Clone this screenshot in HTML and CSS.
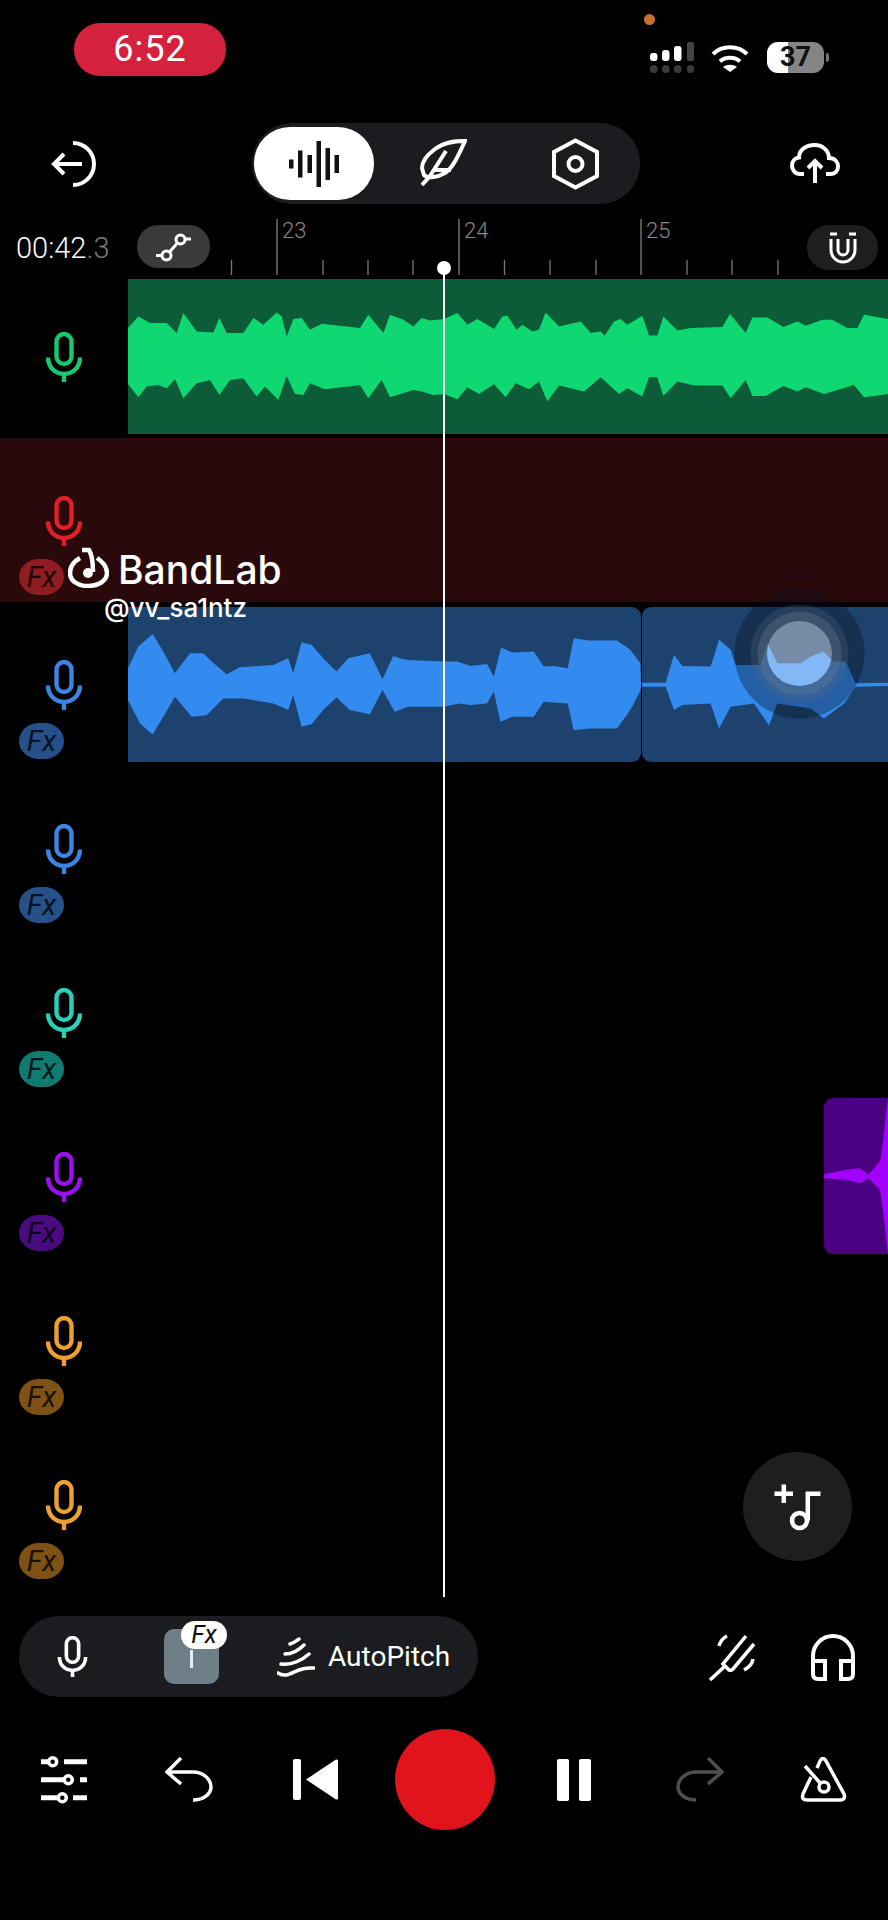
FILE: index.html
```html
<!DOCTYPE html>
<html lang="en">
<head>
<meta charset="utf-8">
<title>BandLab Studio</title>
<link rel="stylesheet" href="styles.css">
</head>
<body>
<svg class="sprite" aria-hidden="true">
  <symbol id="mic" viewBox="0 0 36 50"><rect x="10.500" y="2" width="15" height="30" rx="7.500"/><path d="M2 25.500C2 35 9 42 18 42S34 35 34 25.500M18 42v8"/></symbol>
</svg>
<main class="app">
  <header class="status">
    <div class="clock">6:52</div>
    <span class="rec-dot"></span>
    <div class="status-icons">
      <svg class="signal" viewBox="0 0 44 32"><g fill="#fff"><rect x="0" y="11" width="7.5" height="8" rx="3"/><rect x="12" y="8" width="7.5" height="11" rx="3"/><rect x="24" y="4" width="7.5" height="15" rx="3"/></g><rect x="37" y="0" width="7" height="19" rx="2" fill="#444"/><g fill="#3a3a3a"><rect x="0" y="23" width="7.5" height="8" rx="3.5"/><rect x="12" y="23" width="7.5" height="8" rx="3.5"/><rect x="24" y="23" width="7.5" height="8" rx="3.5"/><rect x="37" y="23" width="7" height="8" rx="3.5"/></g></svg>
      <svg class="wifi" viewBox="0 0 38 29"><path class="st-w" d="M2 11C11 2 27 2 36 11M9 18.500C14 13.500 24 13.500 29 18.500"/><path fill="#fff" d="M12 24C16 21 22 21 26 24L19 29Z"/></svg>
      <div class="battery">37</div>
      <span class="battery-cap"></span>
    </div>
  </header>

  <section class="toolbar">
    <svg class="ic-back st-w" viewBox="0 0 46 46"><path d="M22 2A21 21 0 0 1 22 44M31 23H3M13 13 3 23 13 33"/></svg>
    <div class="seg">
      <div class="seg-item seg-on">
        <svg class="ic-wave" viewBox="0 0 50 46" fill="#111"><rect x="0" y="18.500" width="4.500" height="9"/><rect x="9" y="9.500" width="4.500" height="27"/><rect x="18.500" y="14" width="4.500" height="18"/><rect x="27.500" y="0" width="4.500" height="46"/><rect x="36.500" y="7" width="4.500" height="32"/><rect x="45.500" y="14" width="4.500" height="18"/></svg>
      </div>
      <div class="seg-item">
        <svg class="ic-feather st-w" viewBox="0 0 47 48"><path d="M45 2C34 2 24 3 15 10 7 16 2 23 2 29L4 36C8 40 18 38 25 34 33 29 39 15 45 2ZM2 46 10 37 26 12M15 31H31"/></svg>
      </div>
      <div class="seg-item">
        <svg class="ic-hex st-w" viewBox="0 0 47 52"><path d="M23.500 2.500 45 14V38L23.500 49.500 2 38V14Z"/><circle cx="23.500" cy="26" r="7"/></svg>
      </div>
    </div>
    <svg class="ic-cloud st-w" viewBox="0 0 50 40"><path d="M14 31H10C5 31 2 27 2 22.500 2 18 5 15 9 14.500 9 7 16 2 24.500 2 33 2 39 8 39 15 45 15 48 19 48 23.500 48 28 45 31 40 31H36M25 40V18M18 25 25 18 32 25"/></svg>
  </section>

  <section class="ruler-row">
    <div class="timecode">00:42<span class="timecode-dim">.3</span></div>
    <div class="node-btn">
      <svg class="ic-node st-w3" viewBox="0 0 36 30"><circle cx="24.500" cy="7.500" r="4.500"/><circle cx="10.500" cy="23.500" r="4.500"/><path d="M29 7H35M6 23.500H0M21.500 11 13.500 20"/></svg>
    </div>
    <svg class="ruler" viewBox="210 219 597 56">
      <path class="tick-major" d="M277 219V275M459 219V275M641 219V275"/>
      <path class="tick-minor" d="M231.500 260V275M323 260V275M368 260V275M413 260V275M504.500 260V275M550 260V275M596 260V275M687 260V275M732 260V275M778 260V275"/>
      <text class="ruler-num" x="282" y="238">23</text>
      <text class="ruler-num" x="464" y="238">24</text>
      <text class="ruler-num" x="646" y="238">25</text>
    </svg>
    <div class="magnet-btn">
      <svg class="ic-magnet st-w3" viewBox="0 0 28 32"><path d="M1 2H8M20 2H27M2 7V18A12 12 0 0 0 26 18V7M9 7V18A5 5 0 0 0 19 18V7"/></svg>
    </div>
  </section>

  <section class="tracks">
    <div class="track">
      <div class="head"><svg class="mic mic-green"><use href="#mic"/></svg></div>
      <div class="lane">
        <div class="clip clip-green">
          <svg class="wave wave-green" viewBox="384 28 2280 464" preserveAspectRatio="none">
            <polygon points="384,175 415,140 450,160 500,160 530,190 550,130 590,185 640,188 658,145 680,190 730,190 760,145 790,165 830,128 845,140 860,200 880,148 905,145 930,180 965,162 1080,175 1105,135 1150,190 1170,135 1210,150 1240,170 1265,145 1290,152 1333,148 1333,372 1300,375 1265,365 1240,360 1170,382 1145,330 1105,385 1080,345 975,358 930,340 910,375 885,372 860,318 835,390 795,350 770,380 730,325 690,330 658,375 630,330 590,340 550,385 525,328 500,355 475,345 440,350 415,382 384,342"/>
            <polygon transform="translate(1332)" points="0,148 40,130 70,165 100,148 150,178 175,140 190,138 218,180 235,165 265,185 285,180 305,128 345,170 410,155 440,190 470,185 482,198 510,155 530,148 550,165 595,138 615,197 640,197 658,140 700,182 740,175 835,172 858,133 905,190 925,143 970,143 1018,172 1060,155 1085,168 1135,150 1165,150 1210,175 1240,175 1260,135 1332,148 1332,372 1260,382 1230,345 1140,372 1085,352 1060,365 1018,348 965,378 925,378 905,330 860,385 835,347 750,347 700,335 658,378 640,322 615,322 595,380 550,355 525,372 470,322 420,365 345,347 310,395 285,335 255,358 215,340 185,382 150,343 105,372 70,352 40,388 0,372"/>
          </svg>
        </div>
      </div>
    </div>

    <div class="track track-armed">
      <div class="head"><svg class="mic mic-red"><use href="#mic"/></svg><div class="fx fx-red">Fx</div></div>
      <div class="lane"></div>
    </div>

    <div class="track">
      <div class="head"><svg class="mic mic-blue"><use href="#mic"/></svg><div class="fx fx-blue">Fx</div></div>
      <div class="lane lane-split">
        <div class="clip clip-blue clip-a">
          <svg class="wave wave-blue" viewBox="384 1012 1540 463" preserveAspectRatio="none">
            <polygon points="384,1195 415,1130 458,1093 490,1145 525,1210 570,1150 610,1150 635,1175 680,1213 720,1192 820,1185 865,1165 880,1210 905,1117 935,1125 970,1165 1010,1205 1045,1165 1110,1150 1148,1228 1180,1158 1200,1165 1225,1170 1333,1175 1333,1310 1225,1310 1185,1325 1148,1260 1110,1332 1050,1320 1010,1282 970,1320 935,1362 905,1370 880,1275 865,1320 820,1300 730,1285 670,1285 620,1335 575,1340 525,1280 490,1340 458,1393 420,1360 384,1290"/>
            <polygon transform="translate(1332)" points="0,1175 40,1175 80,1188 130,1182 150,1220 172,1133 205,1148 270,1145 300,1190 330,1188 372,1195 390,1105 435,1112 520,1112 560,1140 590,1180 592,1237 592,1250 590,1262 560,1320 520,1375 435,1375 390,1380 372,1300 300,1295 270,1340 205,1340 170,1355 150,1265 130,1300 80,1305 45,1300 0,1310"/>
          </svg>
        </div>
        <div class="clip clip-blue clip-b">
          <svg class="wave wave-blue" viewBox="594 1012 738 463" preserveAspectRatio="none">
            <polygon points="594,1238 665,1238 690,1155 715,1188 800,1190 825,1110 860,1140 875,1185 950,1185 970,1120 1000,1180 1070,1180 1100,1160 1140,1145 1165,1175 1205,1175 1235,1240 1332,1238 1332,1248 1235,1250 1200,1300 1140,1345 1100,1315 1000,1300 975,1365 930,1300 860,1310 825,1375 800,1300 715,1305 690,1320 665,1250 594,1250"/>
          </svg>
        </div>
      </div>
    </div>

    <div class="track">
      <div class="head"><svg class="mic mic-blue"><use href="#mic"/></svg><div class="fx fx-blue">Fx</div></div>
      <div class="lane"></div>
    </div>
    <div class="track">
      <div class="head"><svg class="mic mic-teal"><use href="#mic"/></svg><div class="fx fx-teal">Fx</div></div>
      <div class="lane"></div>
    </div>
    <div class="track">
      <div class="head"><svg class="mic mic-purple"><use href="#mic"/></svg><div class="fx fx-purple">Fx</div></div>
      <div class="lane lane-end">
        <div class="clip clip-purple">
          <svg class="wave wave-purple" viewBox="372 55 192 467" preserveAspectRatio="none">
            <polygon points="372,283 440,270 480,265 505,285 540,245 550,180 558,100 564,55 564,522 558,470 550,400 540,330 505,295 480,310 440,300 372,295"/>
          </svg>
        </div>
      </div>
    </div>
    <div class="track">
      <div class="head"><svg class="mic mic-orange"><use href="#mic"/></svg><div class="fx fx-orange">Fx</div></div>
      <div class="lane"></div>
    </div>
    <div class="track">
      <div class="head"><svg class="mic mic-orange"><use href="#mic"/></svg><div class="fx fx-orange">Fx</div></div>
      <div class="lane"></div>
    </div>
  </section>

  <section class="inputbar">
    <div class="input-pill">
      <svg class="mic mic-white"><use href="#mic"/></svg>
      <div class="fx-slot">
        <span class="fx-line"></span>
        <span class="fx-bubble">Fx</span>
      </div>
      <svg class="ic-autopitch" viewBox="0 0 38 40"><path d="M13 7C17 6 19 4 22 2M8 17C15 17 22 13 27 8M4 27C14 28 24 24 32 17M1 36C8 41 14 36 22 33S32 31 37 31"/></svg>
      <span class="autopitch">AutoPitch</span>
    </div>
    <svg class="ic-fork st-w35" viewBox="0 0 48 48"><path d="M38 3 15 31 21 37C23 38 24 37 25 36L46 11M2 47 16 34M19 3Q13 6 11 13M45 26Q44 33 36 37"/></svg>
    <svg class="ic-phones st-w" viewBox="0 0 46 48"><path d="M3 36V23A20 20 0 0 1 43 23V36M3 28H15V46H8Q3 46 3 41ZM43 28H31V46H38Q43 46 43 41Z"/></svg>
  </section>

  <section class="transport">
    <svg class="ic-sliders" viewBox="0 0 46 50"><path class="s-line" d="M0 6.700H7M23 6.700H46M0 24.700H23M39 24.700H46M0 42.700H17M32 42.700H46"/><circle class="s-knob" cx="11.700" cy="6.700" r="4"/><circle class="s-knob" cx="27.300" cy="24.700" r="4"/><circle class="s-knob" cx="21.300" cy="42.700" r="4"/></svg>
    <svg class="ic-undo st-w35" viewBox="0 0 48 45"><path d="M16 1 2 15 16 27M2 15H28C38 15 46 22 46 30S37 43 28 43"/></svg>
    <svg class="ic-prev" viewBox="0 0 45 41" fill="#fff"><rect width="8" height="41" rx="2"/><path d="M13 20.500 43 0.500Q45 0 45 2V39Q45 41 43 40.500Z"/></svg>
    <div class="record"></div>
    <div class="pause"><span></span><span></span></div>
    <svg class="ic-redo" viewBox="0 0 48 45"><path d="M32 1 46 15 32 27M46 15H20C10 15 2 22 2 30S11 43 20 43"/></svg>
    <svg class="ic-metro st-w35" viewBox="0 0 48 45"><path d="M11 20 3 37Q1 43 7 43H40Q46 43 44 37L26 4Q23-1 20 4L17 11M5 9 21 27"/><circle cx="24" cy="30" r="5"/></svg>
  </section>

  <div class="playhead"><span class="playhead-knob"></span></div>

  <div class="touch"></div>

  <div class="watermark">
    <div class="wm-brand">
      <svg class="wm-logo" viewBox="0 0 41 41"><path class="wm-stroke" d="M12 11C5 15 2 21 2 26 2 34 10 39 20 39 30 39 39 34 39 26 39 20 35 15 29 11M14 3H21C24 8 25 17 25 25"/><circle cx="20" cy="26" r="5" fill="#fff"/></svg>
      <span class="wm-name">BandLab</span>
    </div>
    <div class="wm-handle">@vv_sa1ntz</div>
  </div>

  <button class="add-btn" type="button" aria-label="Add track">
    <svg class="ic-add" viewBox="0 0 48 48"><path d="M0.500 10.800H19M9.800 1.500V20M33.800 37.500V10.800H46.500"/><circle cx="25.500" cy="37.500" r="7.500"/></svg>
  </button>
</main>
</body>
</html>
```

FILE: styles.css
```css
* { box-sizing: border-box; }
html, body { margin: 0; padding: 0; background: #000; }
body { font-family: Roboto, "Liberation Sans", sans-serif; color: #fff; }
svg { display: block; }
.sprite { position: absolute; width: 0; height: 0; }

.app { position: relative; width: 888px; height: 1920px; overflow: hidden; background: #000; display: flex; flex-direction: column; }

.st-w, .st-w3, .st-w35 { fill: none; stroke: #fff; }
.st-w { stroke-width: 4; }
.st-w3 { stroke-width: 3; }
.st-w35 { stroke-width: 3.5; }

/* status */
.status { height: 123px; padding: 23px 59px 0 74px; display: flex; justify-content: space-between; align-items: flex-start; }
.clock { width: 152px; height: 53px; border-radius: 26px; background: #d4213d; font-size: 36px; line-height: 53px; text-align: center; letter-spacing: 1px; }
.rec-dot { position: absolute; left: 644px; top: 14px; width: 11px; height: 11px; border-radius: 50%; background: #c8702c; }
.status-icons { margin-top: 19px; display: flex; align-items: flex-start; }
.signal { width: 44px; height: 32px; }
.wifi { width: 38px; height: 29px; margin: 1px 0 0 17px; }
.battery { width: 57px; height: 31px; margin-left: 18px; border-radius: 11px; background: linear-gradient(90deg, #fff 0 21px, #858585 21px); color: #111; font-weight: 700; font-size: 27px; line-height: 31px; text-align: center; }
.battery-cap { width: 3px; height: 9px; margin: 11px 0 0 2px; border-radius: 0 3px 3px 0; background: #777; }

/* toolbar */
.toolbar { height: 81px; display: grid; grid-template-columns: 252px 388px 1fr; align-items: center; }
.ic-back { width: 46px; height: 46px; margin-left: 51px; }
.seg { height: 81px; padding: 4px 2px; border-radius: 40px; background: #1a1c20; display: grid; grid-template-columns: 120px 138px 126px; }
.seg-item { display: flex; align-items: center; justify-content: center; }
.seg-on { background: #fff; border-radius: 36px; }
.ic-wave { width: 50px; height: 46px; }
.ic-feather { width: 47px; height: 48px; margin-top: -2px; }
.ic-hex { width: 47px; height: 52px; }
.ic-cloud { width: 50px; height: 40px; margin: -2px 0 0 150px; }

/* ruler */
.ruler-row { margin-top: 15px; height: 55px; display: flex; align-items: flex-start; }
.timecode { width: 137px; padding: 16px 0 0 16px; font-size: 29px; line-height: 26px; font-weight: 300; white-space: nowrap; }
.timecode-dim { color: #7a7a7a; }
.node-btn { width: 73px; height: 43px; margin-top: 6px; border-radius: 21px; background: #3a3a3c; display: flex; align-items: center; justify-content: center; }
.ic-node { width: 36px; height: 30px; }
.ruler { width: 597px; height: 56px; flex: none; }
.tick-major { stroke: #6f6f6f; stroke-width: 1.5; fill: none; }
.tick-minor { stroke: #777; stroke-width: 1.3; fill: none; }
.ruler-num { fill: #8a8a8a; font-family: Roboto, "Liberation Sans", sans-serif; font-size: 22px; font-weight: 300; }
.magnet-btn { width: 71px; height: 45px; margin-top: 6px; border-radius: 22px; background: #1c1e20; display: flex; align-items: center; justify-content: center; }
.ic-magnet { width: 28px; height: 32px; }

/* tracks */
.tracks { display: flex; flex-direction: column; }
.track { height: 164px; display: grid; grid-template-columns: 128px 1fr; }
.track-armed { background: #2a090b; }
.head { padding-top: 58px; display: flex; flex-direction: column; align-items: flex-start; }
.mic { width: 36px; height: 50px; margin-left: 46px; flex: none; fill: none; stroke: currentColor; stroke-width: 4.4; }
.mic-green { color: #15c971; }
.mic-red { color: #e01f27; }
.mic-blue { color: #3b84e4; }
.mic-teal { color: #2bd0bb; }
.mic-purple { color: #9a10f0; }
.mic-orange { color: #eda030; }
.mic-white { color: #fff; width: 31px; height: 41px; margin: 0; }
.fx { width: 45px; height: 36px; margin: 13px 0 0 19px; border-radius: 20px / 18px; text-align: center; font-style: italic; font-size: 29px; line-height: 36px; color: rgba(0, 0, 0, 0.8); }
.fx-red { background: #8e1c20; }
.fx-blue { background: #26508a; }
.fx-teal { background: #107b70; }
.fx-purple { background: #4a0b80; }
.fx-orange { background: #7e5215; }

.lane { padding: 5px 0 4px; display: flex; min-width: 0; }
.lane-split { gap: 1px; }
.lane-end { justify-content: flex-end; padding-top: 4px; }
.clip { height: 155px; flex: none; overflow: hidden; }
.clip-green { width: 760px; background: #0c5c37; }
.clip-blue { background: #1e426e; }
.clip-a { width: 513px; border-radius: 0 9px 9px 0; }
.clip-b { width: 246px; border-radius: 9px 0 0 9px; }
.clip-purple { width: 64px; height: 156px; background: #4a0080; border-radius: 9px 0 0 9px; }
.wave { width: 100%; height: 100%; }
.wave-green { fill: #0fd873; }
.wave-blue { fill: #338bef; }
.wave-purple { fill: #a300ff; }

/* input bar */
.inputbar { margin-top: 30px; height: 81px; padding: 0 32px 0 19px; display: flex; align-items: center; }
.input-pill { width: 459px; height: 81px; border-radius: 40px; background: #1a1c1f; padding-left: 38px; display: flex; align-items: center; }
.fx-slot { position: relative; width: 55px; height: 55px; margin-left: 76px; border-radius: 10px; background: #6e7f88; }
.fx-line { position: absolute; left: 25.500px; top: 21px; width: 3px; height: 18px; background: #e6eef0; }
.fx-bubble { position: absolute; left: 17px; top: -8px; width: 46px; height: 28px; border-radius: 14px; background: #fff; color: #111; text-align: center; font-style: italic; font-size: 25px; line-height: 28px; }
.ic-autopitch { width: 38px; height: 40px; margin-left: 58px; fill: none; stroke: #fff; stroke-width: 3.5; stroke-linecap: round; }
.autopitch { margin-left: 13px; font-size: 28px; font-weight: 400; line-height: 30px; white-space: nowrap; }
.ic-fork { width: 48px; height: 48px; margin-left: auto; }
.ic-phones { width: 46px; height: 48px; margin-left: 54px; }

/* transport */
.transport { margin-top: 32px; height: 101px; padding-left: 2px; display: grid; grid-template-columns: 124px 125px 128px 131px 128px 124px 124px; align-items: center; justify-items: center; }
.ic-sliders { width: 46px; height: 50px; }
.s-line { stroke: #fff; stroke-width: 5; fill: none; }
.s-knob { stroke: #fff; stroke-width: 3.5; fill: none; }
.ic-undo, .ic-redo, .ic-metro { width: 48px; height: 45px; }
.ic-redo { fill: none; stroke: #4f4f4f; stroke-width: 3.5; }
.ic-prev { width: 45px; height: 41px; }
.record { width: 100px; height: 101px; border-radius: 50%; background: #e0141a; }
.pause { width: 34px; height: 42px; display: flex; justify-content: space-between; }
.pause span { width: 12px; border-radius: 2px; background: #fff; }

/* overlays */
.playhead { position: absolute; left: 443px; top: 272px; width: 2px; height: 1325px; background: #fff; }
.playhead-knob { position: absolute; left: -6px; top: -11px; width: 14px; height: 14px; border-radius: 50%; background: #fff; }
.touch { position: absolute; left: 766.500px; top: 620.500px; width: 65px; height: 65px; border-radius: 50%; background: rgba(255, 255, 255, 0.39); box-shadow: 0 0 0 9.500px rgba(120, 130, 140, 0.3), 0 0 0 16.500px rgba(90, 105, 130, 0.25), 0 0 0 32.500px rgba(10, 15, 30, 0.35); }
.watermark { position: absolute; left: 68px; top: 547px; }
.wm-brand { display: flex; align-items: center; gap: 9px; }
.wm-logo { width: 41px; height: 41px; }
.wm-stroke { fill: none; stroke: #fff; stroke-width: 4.5; }
.wm-name { position: relative; top: 2px; font-family: Inter, "Liberation Sans", sans-serif; font-size: 39px; font-weight: 500; line-height: 41px; }
.wm-handle { margin: 7px 0 0 36px; font-family: Inter, "Liberation Sans", sans-serif; font-size: 26px; font-weight: 500; line-height: 26px; white-space: nowrap; }
.add-btn { position: absolute; left: 743px; top: 1452px; width: 109px; height: 109px; padding: 0; border: 0; border-radius: 50%; background: #1c1e20; display: flex; align-items: center; justify-content: center; }
.ic-add { width: 48px; height: 48px; fill: none; stroke: #fff; stroke-width: 4.5; }
```
